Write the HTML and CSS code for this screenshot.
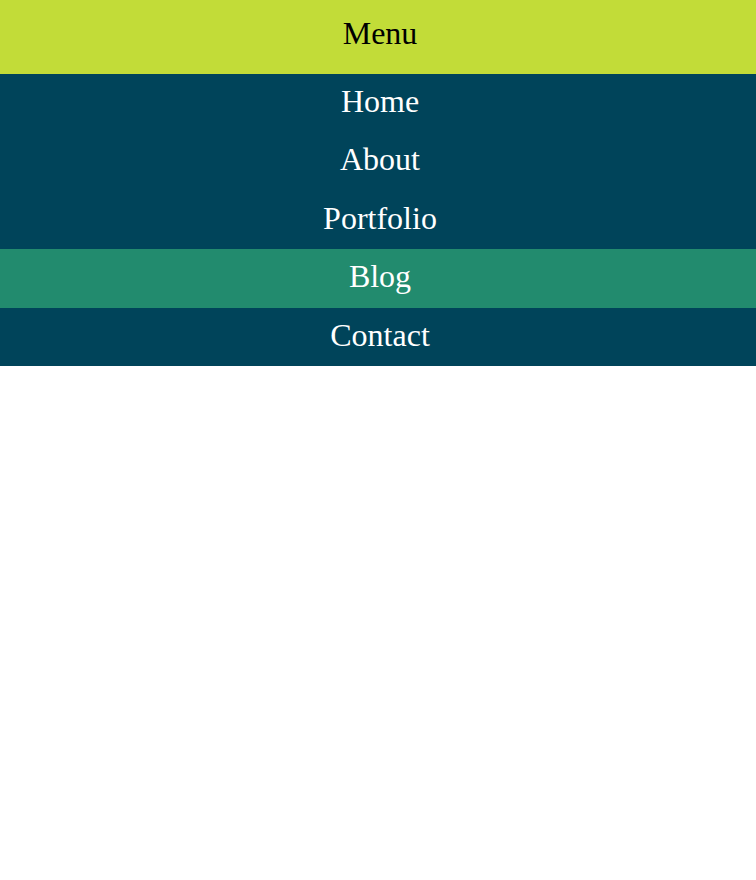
FILE: index.html
```html
<!DOCTYPE html>
<html>
<head>
<meta charset="utf-8">
<link rel="stylesheet" href="styles.css">
</head>
<body>
<nav class="menu">
  <div class="menu-title">Menu</div>
  <ul class="menu-list">
    <li><a class="menu-item" href="#">Home</a></li>
    <li><a class="menu-item" href="#">About</a></li>
    <li><a class="menu-item" href="#">Portfolio</a></li>
    <li><a class="menu-item active" href="#">Blog</a></li>
    <li><a class="menu-item" href="#">Contact</a></li>
  </ul>
</nav>
</body>
</html>
```
FILE: styles.css
```css
body {
  margin: 0;
  font-family: "Liberation Serif", "Times New Roman", serif;
  background: #ffffff;
}
.menu {
  display: flex;
  flex-direction: column;
}
.menu-title {
  background: #c2dc38;
  color: #000000;
  font-size: 32px;
  text-align: center;
  height: 74px;
  line-height: 66px;
  padding-left: 4px;
}
.menu-list {
  list-style: none;
  margin: 0;
  padding: 0;
  background: #00445a;
}
.menu-item {
  display: block;
  height: 58.4px;
  line-height: 54px;
  text-align: center;
  font-size: 32px;
  color: #ffffff;
  text-decoration: none;
  padding-left: 4px;
}
.menu-item.active {
  background: #228b6e;
}
```
